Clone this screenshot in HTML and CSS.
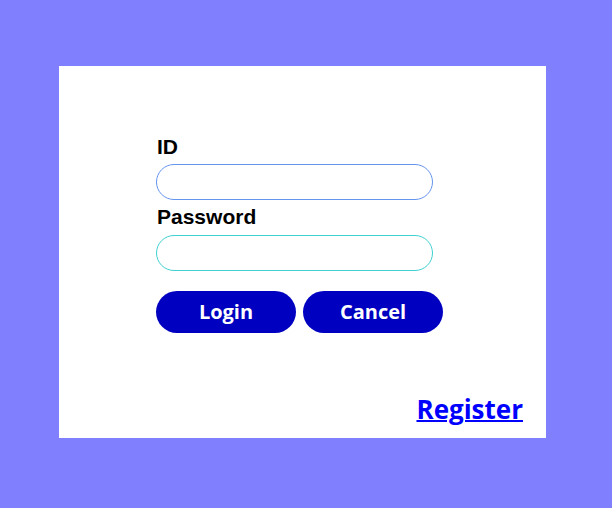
FILE: index.html
```html
<!DOCTYPE html>
<html>
<head>
<meta charset="utf-8">
<link rel="stylesheet" href="styles.css">
</head>
<body>
<div class="panel">
  <form class="login-form">
    <label class="field-label" for="id">ID</label>
    <input class="field field-id" id="id" type="text">
    <label class="field-label field-label-pw" for="pw">Password</label>
    <input class="field field-pw" id="pw" type="password">
    <div class="actions">
      <button type="button" class="btn">Login</button>
      <button type="button" class="btn">Cancel</button>
    </div>
  </form>
  <div class="footer">
    <a class="register" href="#">Register</a>
  </div>
</div>
</body>
</html>
```
FILE: styles.css
```css
html, body {
  margin: 0;
  padding: 0;
}
body {
  background: #8080ff;
  width: 612px;
  height: 508px;
  padding: 66px 0 0 59px;
  box-sizing: border-box;
}
.panel {
  width: 487px;
  height: 372px;
  background: #ffffff;
  box-sizing: border-box;
  padding: 69px 23px 0 97px;
  display: flex;
  flex-direction: column;
}
.login-form {
  display: flex;
  flex-direction: column;
  align-items: flex-start;
  margin: 0;
}
.field-label {
  font-family: "Liberation Sans", Arial, sans-serif;
  font-weight: bold;
  font-size: 21px;
  line-height: 24px;
  color: #000;
  margin-left: 1px;
  margin-bottom: 5px;
}
.field-label-pw {
  margin-bottom: 6px;
}
.field {
  width: 277px;
  height: 36px;
  box-sizing: border-box;
  border-radius: 18px;
  background: #fff;
  outline: none;
  margin: 0 0 5px 0;
  padding: 0 16px;
  font-size: 16px;
}
.field-id {
  border: 1px solid #6495ed;
}
.field-pw {
  border: 1px solid #40d0d0;
  margin-bottom: 0;
}
.actions {
  display: flex;
  gap: 7px;
  margin-top: 20px;
}
.btn {
  width: 140px;
  height: 42px;
  border-radius: 21px;
  border: none;
  background: #0000c0;
  color: #fff;
  font-family: "Open Sans", sans-serif;
  font-weight: bold;
  font-size: 20px;
  padding: 0 0 2px 0;
}
.footer {
  margin-top: auto;
  display: flex;
  justify-content: flex-end;
  padding-bottom: 13px;
}
.register {
  font-family: "Open Sans", sans-serif;
  font-weight: bold;
  font-size: 26px;
  color: #0000ff;
  text-decoration: underline;
  text-decoration-thickness: 2px;
  line-height: 32px;
}
```
